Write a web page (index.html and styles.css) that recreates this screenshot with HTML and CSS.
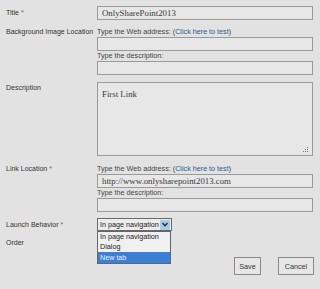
FILE: index.html
```html
<!DOCTYPE html>
<html>
<head>
<meta charset="utf-8">
<link rel="stylesheet" href="styles.css">
</head>
<body>
<div class="form">
  <div class="row r-title">
    <div class="label lh14">Title <span class="req">*</span></div>
    <div class="field">
      <div class="box h14"><span class="serif">OnlySharePoint2013</span></div>
    </div>
  </div>

  <div class="row r-bg">
    <div class="label">Background Image Location</div>
    <div class="field">
      <div class="hint">Type the Web address: (<a class="link">Click here to test</a>)</div>
      <div class="box h14"></div>
      <div class="hint">Type the description:</div>
      <div class="box h14"></div>
    </div>
  </div>

  <div class="row r-desc">
    <div class="label pt1">Description</div>
    <div class="field">
      <div class="box area">
        <span class="serif area-text">First Link</span>
        <svg class="grip" width="7" height="7" viewBox="0 0 7 7">
          <rect x="5" y="1" width="1" height="1" fill="#777"/>
          <rect x="5" y="3" width="1" height="1" fill="#777"/>
          <rect x="3" y="3" width="1" height="1" fill="#777"/>
          <rect x="5" y="5" width="1" height="1" fill="#777"/>
          <rect x="3" y="5" width="1" height="1" fill="#777"/>
          <rect x="1" y="5" width="1" height="1" fill="#777"/>
        </svg>
      </div>
    </div>
  </div>

  <div class="row r-link">
    <div class="label">Link Location <span class="req">*</span></div>
    <div class="field">
      <div class="hint">Type the Web address: (<a class="link">Click here to test</a>)</div>
      <div class="box h14"><span class="serif">http://www.onlysharepoint2013.com</span></div>
      <div class="hint">Type the description:</div>
      <div class="box h14"></div>
    </div>
  </div>

  <div class="row r-launch">
    <div class="label lh13">Launch Behavior <span class="req">*</span></div>
    <div class="field">
      <div class="select-wrap">
        <div class="select">
          <span class="sel-text">In page navigation</span>
          <span class="sel-btn">
            <svg width="6" height="5" viewBox="0 0 6 5"><path d="M0.5 1 L3 3.8 L5.5 1" fill="none" stroke="#1b2a3a" stroke-width="1.3"/></svg>
          </span>
        </div>
        <ul class="menu">
          <li>In page navigation</li>
          <li>Dialog</li>
          <li class="active">New tab</li>
        </ul>
      </div>
    </div>
  </div>

  <div class="row r-order">
    <div class="label">Order</div>
  </div>

  <div class="buttons">
    <button class="btn save">Save</button>
    <button class="btn cancel">Cancel</button>
  </div>
</div>
</body>
</html>
```

FILE: styles.css
```css
html, body {
  margin: 0;
  padding: 0;
}
body {
  background: #e2e2e2;
  width: 320px;
  height: 289px;
  overflow: hidden;
  font-family: "Liberation Sans", Arial, sans-serif;
  font-size: 7.2px;
  color: #3a3a3a;
}
.form {
  padding: 6px 6px 0 6px;
}
.row {
  display: flex;
  align-items: flex-start;
}
.label {
  width: 91px;
  flex: none;
  line-height: 10px;
  font-size: 7px;
  color: #333;
  white-space: nowrap;
}
.lh14 { line-height: 14px; }
.lh13 { line-height: 13px; }
.pt1 { padding-top: 1px; }
.req { color: #666; }
.field {
  width: 216px;
  flex: none;
}
.hint {
  line-height: 10px;
  height: 10px;
  color: #444;
  white-space: nowrap;
}
.link {
  color: #1f5b8c;
}
.box {
  box-sizing: border-box;
  border: 1px solid #9a9a9a;
  background: #e7e7e7;
  position: relative;
}
.h14 {
  height: 14px;
  padding-left: 4px;
  line-height: 12px;
}
.serif {
  font-family: "Liberation Serif", "Times New Roman", serif;
  font-size: 8.8px;
  color: #3a3a3a;
}
.r-bg { margin-top: 7px; }
.r-desc { margin-top: 7px; }
.area {
  height: 74px;
  padding: 5px 4px;
  line-height: 12px;
}
.area-text { display: block; }
.grip {
  position: absolute;
  right: 3px;
  bottom: 2px;
}
.r-link { margin-top: 8px; }
.r-launch { margin-top: 6px; }
.select-wrap {
  position: relative;
  width: 75px;
}
.select {
  box-sizing: border-box;
  height: 13px;
  border: 1px solid #6a6a6a;
  background: #ececec;
  display: flex;
  align-items: center;
  padding-left: 2px;
  position: relative;
}
.sel-text {
  flex: 1;
  line-height: 11px;
  color: #222;
  white-space: nowrap;
  overflow: hidden;
}
.sel-btn {
  width: 10px;
  height: 10px;
  margin-right: 1px;
  background: #a9cbe4;
  display: flex;
  align-items: center;
  justify-content: center;
}
.menu {
  position: absolute;
  left: 0;
  top: 13px;
  width: 74px;
  margin: 0;
  padding: 0;
  list-style: none;
  box-sizing: border-box;
  border: 1px solid #666;
  background: #f0f0f0;
  z-index: 2;
}
.menu li {
  height: 10px;
  line-height: 10px;
  padding-left: 2px;
  color: #222;
  white-space: nowrap;
}
.menu li.active {
  background: #3c7fd4;
  color: #e8f0fa;
  height: 11px;
  line-height: 11px;
}
.r-order { margin-top: 7px; }
.buttons {
  display: flex;
  justify-content: flex-end;
  gap: 17px;
  margin-top: 9px;
}
.btn {
  box-sizing: border-box;
  height: 18px;
  border: 1px solid #8a8a8a;
  background: #e6e6e6;
  font-family: "Liberation Sans", Arial, sans-serif;
  font-size: 7.2px;
  color: #333;
  padding: 0;
  margin: 0;
}
.save { width: 27px; }
.cancel { width: 36px; }
```
